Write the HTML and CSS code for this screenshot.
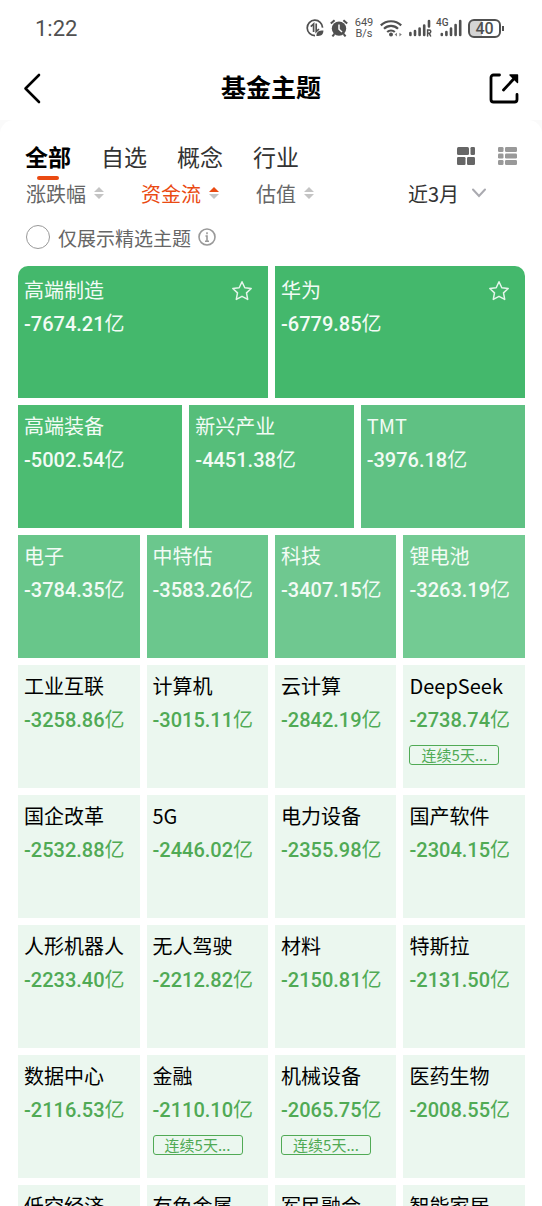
FILE: index.html
```
<!DOCTYPE html>
<html lang="zh-CN">

<head>
    <meta charset="utf-8">
    <title>基金主题</title>
    <meta name="viewport" content="width=device-width, initial-scale=1" />
    <link rel="stylesheet" href="styles.css">
</head>

<body>
    <div class="statusbar">
        <span class="clock">1:22</span>
        <div class="status-icons">
            <svg width="18" height="18" viewBox="0 0 18 18" fill="none" stroke="#505050" stroke-width="1.7">
                <path d="M16.600 8.600A7.700 7.700 0 1 0 9 16.600" />
                <path d="M4.800 7.600 7.600 5v8M10.200 4.600v8l2.800-2.600" />
                <path d="M10.400 17c0-4.400 2-5.600 7-5.600 0 4.400-2.400 5.600-7 5.600z" fill="#505050" stroke="none" />
            </svg>
            <svg width="18" height="18" viewBox="0 0 18 18">
                <circle cx="9" cy="9.600" r="7.200" fill="#505050" />
                <path d="M.8 4.600 4.600 1.200M17.200 4.600 13.400 1.200M4.400 15 2.400 17.400M13.600 15l2 2.400" stroke="#505050" stroke-width="2" />
                <path d="M9 5.400v4.800l3 2.800" fill="none" stroke="#fff" stroke-width="1.500" />
            </svg>
            <span class="speed">649<br>B/s</span>
            <svg width="22" height="18" viewBox="0 0 22 18" fill="none" stroke="#505050" stroke-width="2.200">
                <path d="M.8 6.400a14.600 14.600 0 0 1 20.400 0M4 9.800a10 10 0 0 1 14 0M7.200 13a5.600 5.600 0 0 1 7.600 0" />
                <circle cx="11" cy="15.600" r="2" fill="#505050" stroke="none" />
                <path d="M14.600 15.600l2.400-1.800v3.600zM21.800 15.600l-2.400-1.800v3.600z" fill="#808080" stroke="none" />
            </svg>
            <svg width="24" height="18" viewBox="0 0 24 18" stroke="#505050" stroke-width="2.600" stroke-linecap="round">
                <path d="M2.400 16v-2M7 16v-4M11.600 16V9.500M16.200 16V6.500M21 2v5.500" />
                <path d="M19.600 17v-6h1.600a1.600 1.600 0 0 1 0 3.200h-1.600M21.200 14.400l1.400 2.600" fill="none" stroke-width="1.500" />
            </svg>
            <span class="cell">
                <span class="net">4G</span>
                <svg width="24" height="18" viewBox="0 0 24 18" stroke="#505050" stroke-width="2.600" stroke-linecap="round">
                    <path d="M3.800 16v-1M8.400 16v-3M13 16V9.500M17.600 16V6M22.200 16V2" />
                </svg>
            </span>
            <span class="battery">40</span>
        </div>
    </div>

    <header class="topnav">
        <button class="icon-btn" type="button" aria-label="返回">
            <svg width="32" height="32" viewBox="0 0 32 32" fill="none" stroke="#000" stroke-width="2.600" stroke-linecap="round" stroke-linejoin="round">
                <path d="M17 3 3.500 16.500 17 30" />
            </svg>
        </button>
        <h1>基金主题</h1>
        <button class="icon-btn" type="button" aria-label="分享">
            <svg width="32" height="32" viewBox="0 0 32 32" fill="none" stroke="#000" stroke-width="2.800" stroke-linecap="round" stroke-linejoin="round">
                <path d="M11.500 3H5.500A2.500 2.500 0 0 0 3 5.500v22A2.500 2.500 0 0 0 5.500 30h21A2.500 2.500 0 0 0 29 27.500v-5" />
                <path d="M15.500 18 28 4.500" />
                <path d="M22 3H29.500v7.500z" fill="#000" stroke-width="1.400" />
            </svg>
        </button>
    </header>

    <div class="content">
        <main class="panel">
            <div class="tabs">
                <button class="tab active" type="button">全部</button>
                <button class="tab" type="button">自选</button>
                <button class="tab" type="button">概念</button>
                <button class="tab" type="button">行业</button>
                <div class="views">
                    <button class="icon-btn" type="button" aria-label="色块视图">
                        <svg width="20" height="20" viewBox="0 0 20 20" fill="#666">
                            <rect x="1" y="1" width="12" height="8" rx="1.500" />
                            <rect x="14.500" y="1" width="4.500" height="8" rx="1.200" />
                            <rect x="1" y="11" width="8.500" height="8" rx="1.200" />
                            <rect x="11" y="11" width="8" height="8" rx="1.200" />
                        </svg>
                    </button>
                    <button class="icon-btn" type="button" aria-label="列表视图">
                        <svg width="20" height="20" viewBox="0 0 20 20" fill="#999">
                            <rect x="0" y="1" width="5.500" height="5" rx="1.200" />
                            <rect x="7" y="1" width="12" height="5" rx="1.200" />
                            <rect x="0" y="7.500" width="5.500" height="5" rx="1.200" />
                            <rect x="7" y="7.500" width="12" height="5" rx="1.200" />
                            <rect x="0" y="14" width="5.500" height="5" rx="1.200" />
                            <rect x="7" y="14" width="12" height="5" rx="1.200" />
                        </svg>
                    </button>
                </div>
            </div>

            <div class="filters">
                <button class="sort" type="button">涨跌幅
                    <svg width="10" height="14" viewBox="0 0 10 14" fill="#c4c4c4"><path d="M5 1l5 5H0zM5 13l5-5H0z" /></svg>
                </button>
                <button class="sort active" type="button">资金流
                    <svg width="10" height="14" viewBox="0 0 10 14" fill="#c4c4c4"><path d="M5 1l5 5H0z" fill="#ea4a12" /><path d="M5 13l5-5H0z" /></svg>
                </button>
                <button class="sort" type="button">估值
                    <svg width="10" height="14" viewBox="0 0 10 14" fill="#c4c4c4"><path d="M5 1l5 5H0zM5 13l5-5H0z" /></svg>
                </button>
                <label class="period">
                    <select aria-label="时间区间">
                        <option>近3月</option>
                    </select>
                    <svg width="14" height="10" viewBox="0 0 14 10" fill="none" stroke="#aaaab0" stroke-width="2" stroke-linecap="round"><path d="M1 1.500 7 8l6-6.500" /></svg>
                </label>
            </div>

            <div class="only">
                <input type="checkbox" id="featured">
                <label for="featured">仅展示精选主题</label>
                <svg width="18" height="18" viewBox="0 0 18 18" fill="none" stroke="#999" stroke-width="1.600">
                    <circle cx="9" cy="9" r="8" />
                    <path d="M9 4.200v2M7.500 8H9v5M7 13.200h4" />
                </svg>
            </div>

            <ul class="tiles">
                <li class="tile half c1">
                    <h2>高端制造</h2>
                    <p>-7674.21<span>亿</span></p>
                    <button class="star" type="button" aria-label="收藏">
                        <svg width="22" height="22" viewBox="0 0 22 22"><path d="M11 1.800l2.800 5.900 6.400.8-4.700 4.400 1.200 6.500L11 16.300l-5.700 3.100 1.200-6.500L1.800 8.500l6.400-.8z" /></svg>
                    </button>
                </li>
                <li class="tile half c1">
                    <h2>华为</h2>
                    <p>-6779.85<span>亿</span></p>
                    <button class="star" type="button" aria-label="收藏">
                        <svg width="22" height="22" viewBox="0 0 22 22"><path d="M11 1.800l2.800 5.900 6.400.8-4.700 4.400 1.200 6.500L11 16.300l-5.700 3.100 1.200-6.500L1.800 8.500l6.400-.8z" /></svg>
                    </button>
                </li>
                <li class="tile third c2">
                    <h2>高端装备</h2>
                    <p>-5002.54<span>亿</span></p>
                </li>
                <li class="tile third c3">
                    <h2>新兴产业</h2>
                    <p>-4451.38<span>亿</span></p>
                </li>
                <li class="tile third c4">
                    <h2>TMT</h2>
                    <p>-3976.18<span>亿</span></p>
                </li>
                <li class="tile c5">
                    <h2>电子</h2>
                    <p>-3784.35<span>亿</span></p>
                </li>
                <li class="tile c6">
                    <h2>中特估</h2>
                    <p>-3583.26<span>亿</span></p>
                </li>
                <li class="tile c7">
                    <h2>科技</h2>
                    <p>-3407.15<span>亿</span></p>
                </li>
                <li class="tile c8">
                    <h2>锂电池</h2>
                    <p>-3263.19<span>亿</span></p>
                </li>
                <li class="tile">
                    <h2>工业互联</h2>
                    <p>-3258.86<span>亿</span></p>
                </li>
                <li class="tile">
                    <h2>计算机</h2>
                    <p>-3015.11<span>亿</span></p>
                </li>
                <li class="tile">
                    <h2>云计算</h2>
                    <p>-2842.19<span>亿</span></p>
                </li>
                <li class="tile">
                    <h2>DeepSeek</h2>
                    <p>-2738.74<span>亿</span></p>
                    <div class="tag">连续5天...</div>
                </li>
                <li class="tile">
                    <h2>国企改革</h2>
                    <p>-2532.88<span>亿</span></p>
                </li>
                <li class="tile">
                    <h2>5G</h2>
                    <p>-2446.02<span>亿</span></p>
                </li>
                <li class="tile">
                    <h2>电力设备</h2>
                    <p>-2355.98<span>亿</span></p>
                </li>
                <li class="tile">
                    <h2>国产软件</h2>
                    <p>-2304.15<span>亿</span></p>
                </li>
                <li class="tile">
                    <h2>人形机器人</h2>
                    <p>-2233.40<span>亿</span></p>
                </li>
                <li class="tile">
                    <h2>无人驾驶</h2>
                    <p>-2212.82<span>亿</span></p>
                </li>
                <li class="tile">
                    <h2>材料</h2>
                    <p>-2150.81<span>亿</span></p>
                </li>
                <li class="tile">
                    <h2>特斯拉</h2>
                    <p>-2131.50<span>亿</span></p>
                </li>
                <li class="tile">
                    <h2>数据中心</h2>
                    <p>-2116.53<span>亿</span></p>
                </li>
                <li class="tile">
                    <h2>金融</h2>
                    <p>-2110.10<span>亿</span></p>
                    <div class="tag">连续5天...</div>
                </li>
                <li class="tile">
                    <h2>机械设备</h2>
                    <p>-2065.75<span>亿</span></p>
                    <div class="tag">连续5天...</div>
                </li>
                <li class="tile">
                    <h2>医药生物</h2>
                    <p>-2008.55<span>亿</span></p>
                </li>
                <li class="tile">
                    <h2>低空经济</h2>
                </li>
                <li class="tile">
                    <h2>有色金属</h2>
                </li>
                <li class="tile">
                    <h2>军民融合</h2>
                </li>
                <li class="tile">
                    <h2>智能家居</h2>
                </li>
            </ul>
        </main>
    </div>
</body>

</html>
```
FILE: styles.css
```
* {
    box-sizing: border-box;
}

html {
    font-family: "Noto Sans CJK SC", sans-serif;
    background-color: #fff;
}

body {
    margin: 0;
}

button,
select {
    font: inherit;
    color: inherit;
    background: none;
    border: 0;
    padding: 0;
    cursor: pointer;
}

svg {
    display: block;
    flex: none;
}

.statusbar {
    display: flex;
    align-items: center;
    justify-content: space-between;
    height: 56px;
    padding: 0 41px 0 35px;
    font-family: Roboto, sans-serif;
    color: #505050;
}

.clock {
    font-size: 22px;
}

.status-icons {
    display: flex;
    align-items: center;
    gap: 6px;
}

.speed {
    width: 20px;
    font-size: 11px;
    line-height: 11px;
    text-align: center;
}

.cell {
    position: relative;
}

.net {
    position: absolute;
    left: -2px;
    top: -2px;
    font-size: 10px;
    font-weight: 500;
    line-height: 12px;
}

.battery {
    position: relative;
    width: 33px;
    height: 19px;
    border: 2px solid #505050;
    border-radius: 6px;
    background: linear-gradient(to right, #d4d4d4 40%, #fff 40%);
    font-size: 16px;
    font-weight: 500;
    line-height: 15px;
    text-align: center;
}

.battery:after {
    position: absolute;
    content: "";
    right: -5px;
    top: 5px;
    width: 2px;
    height: 5px;
    background-color: #505050;
}

.topnav {
    display: flex;
    align-items: center;
    justify-content: space-between;
    height: 64px;
    padding: 0 22px;
}

.topnav h1 {
    margin: 0;
    padding-bottom: 4px;
    font-size: 25px;
    font-weight: 700;
    color: #000;
}

.content {
    background-color: #fafafa;
}

.panel {
    padding: 18px 17px 18px 18px;
    border-radius: 14px;
    background-color: #fff;
}

.tabs {
    display: flex;
    align-items: center;
    gap: 30px;
    height: 36px;
    padding: 0 7px;
}

.tab {
    position: relative;
    font-size: 23px;
    line-height: 36px;
    color: #333;
}

.tab.active {
    font-weight: 700;
    color: #000;
}

.tab.active:after {
    position: absolute;
    content: "";
    left: 12px;
    bottom: -6px;
    width: 22px;
    height: 4px;
    border-radius: 2px;
    background-color: #ea4a12;
}

.views {
    display: flex;
    gap: 22px;
    margin-left: auto;
}

.filters {
    display: flex;
    align-items: center;
    gap: 37px;
    height: 38px;
    padding: 0 39px 0 8px;
    font-size: 20px;
}

.sort {
    display: flex;
    align-items: center;
    gap: 8px;
    color: #666;
}

.sort.active {
    color: #ea4a12;
}

.period {
    display: flex;
    align-items: center;
    gap: 12px;
    margin-left: auto;
    color: #333;
}

.period select {
    appearance: none;
}

.only {
    display: flex;
    align-items: center;
    height: 50px;
    margin-bottom: 4px;
    padding: 0 8px;
    font-size: 19px;
    color: #666;
}

.only input {
    appearance: none;
    width: 24px;
    height: 24px;
    margin: 0 8px 0 0;
    border: 1px solid #999;
    border-radius: 50%;
}

.only input:checked {
    background-color: #ea4a12;
}

.only svg {
    margin-left: 7px;
}

.tiles {
    display: grid;
    grid-template-columns: repeat(12, 1fr);
    gap: 7px;
    margin: 0;
    padding: 0;
    list-style: none;
    border-radius: 10px;
    overflow: hidden;
}

.tile {
    position: relative;
    grid-column: span 3;
    min-height: 123px;
    padding: 4px 6px;
    background-color: #ebf7ef;
    color: #000;
}

.tile.third {
    grid-column: span 4;
}

.tile.half {
    grid-column: span 6;
    min-height: 132px;
    padding-top: 7px;
}

.tile h2 {
    margin: 0;
    font-size: 20px;
    font-weight: 400;
    line-height: 34px;
}

.tile p {
    margin: 0;
    font-family: Roboto, "Noto Sans CJK SC", sans-serif;
    font-size: 20px;
    font-weight: 500;
    line-height: 34px;
    color: #50aa55;
}

.tile p span {
    font-weight: 400;
}

.star {
    position: absolute;
    top: 14px;
    right: 15px;
}

.star svg {
    fill: none;
    stroke: #e4f5ea;
    stroke-width: 1.5;
    stroke-linejoin: round;
}

.tag {
    width: 90px;
    height: 20px;
    margin-top: 8px;
    border: 1px solid #50aa55;
    border-radius: 3px;
    font-size: 15px;
    line-height: 18px;
    text-align: center;
    color: #50aa55;
}

.c1 {
    background-color: #44b86c;
}

.c2 {
    background-color: #4cbc72;
}

.c3 {
    background-color: #56be7a;
}

.c4 {
    background-color: #5fc183;
}

.c5 {
    background-color: #68c68a;
}

.c6 {
    background-color: #6bc78d;
}

.c7 {
    background-color: #6fc890;
}

.c8 {
    background-color: #73cb93;
}

.c1, .c2, .c3, .c4, .c5, .c6, .c7, .c8,
.c1 p, .c2 p, .c3 p, .c4 p, .c5 p, .c6 p, .c7 p, .c8 p {
    color: #f2fbf5;
}
```
